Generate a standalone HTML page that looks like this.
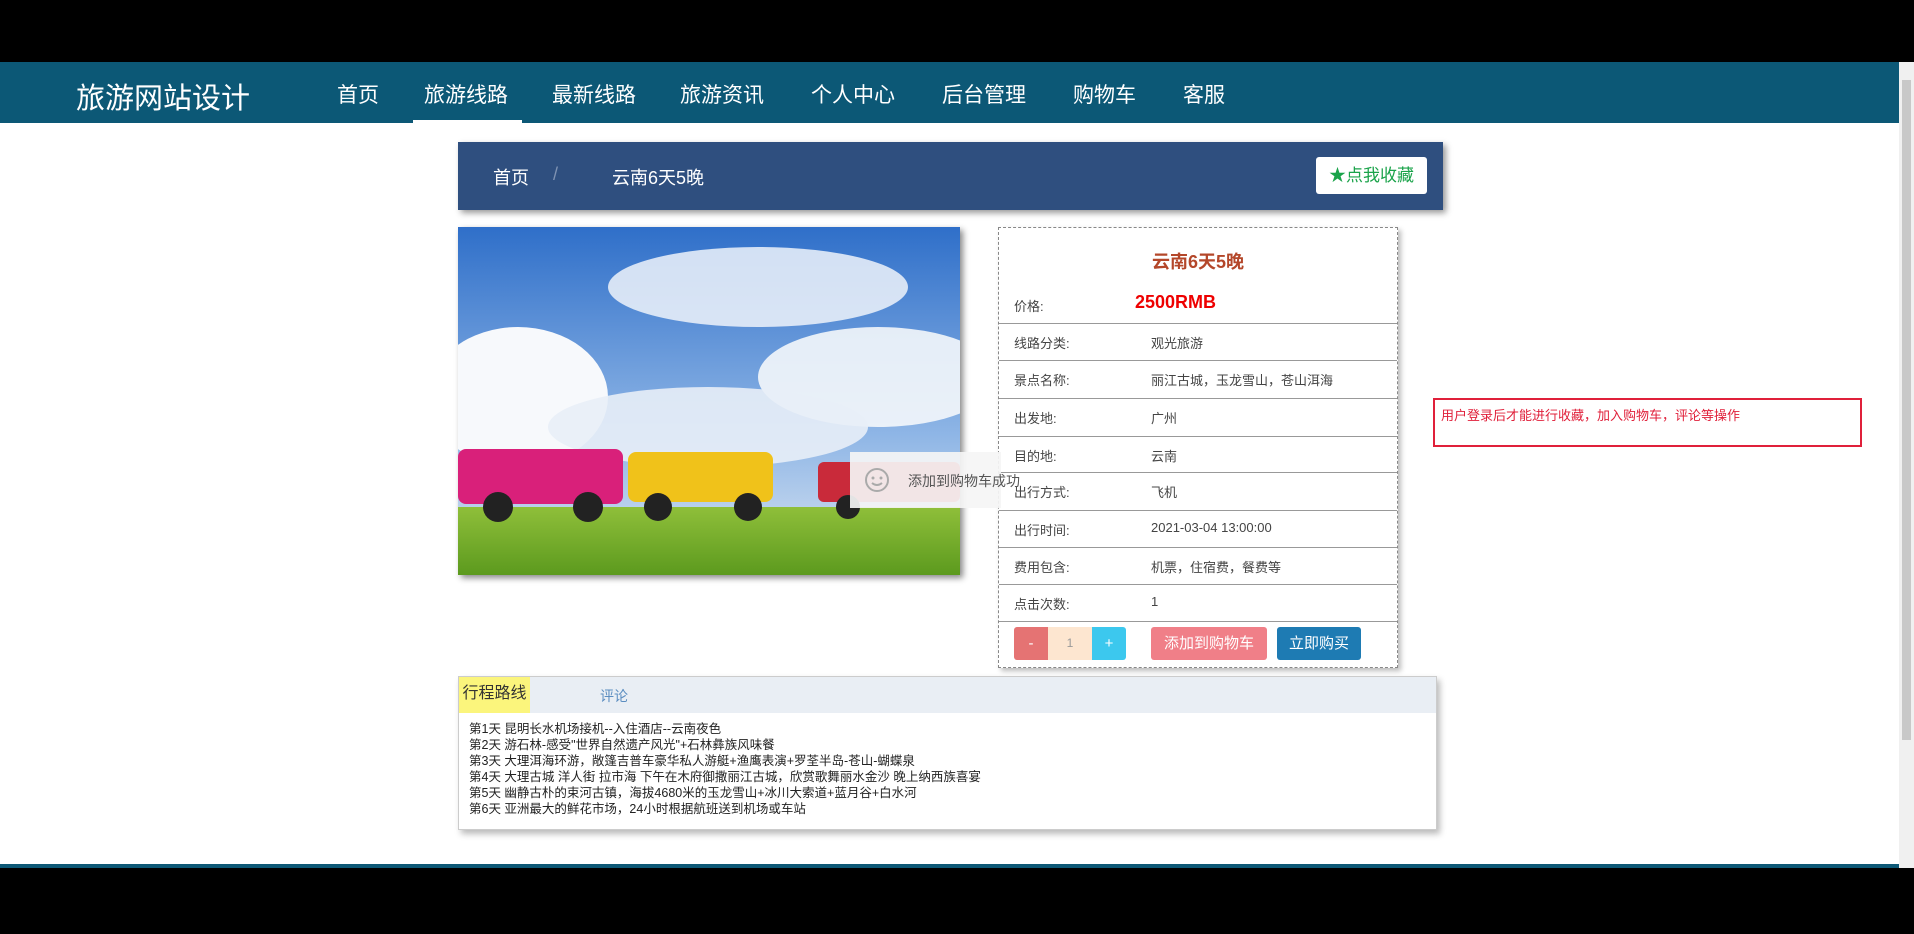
<!DOCTYPE html>
<html><head><meta charset="utf-8"><style>
*{margin:0;padding:0;box-sizing:border-box}
body{width:1914px;height:934px;background:#000;position:relative;overflow:hidden;font-family:"Liberation Sans","Noto Sans CJK SC",sans-serif}
.page{position:absolute;left:0;top:62px;width:1899px;height:802px;background:#fff}
.nav{position:absolute;left:0;top:0;width:1899px;height:61px;background:#0c5876}
.logo{position:absolute;left:76px;top:13px;color:#fff;font-size:29px}
.nav a{position:absolute;top:17px;color:#fff;font-size:21px;text-decoration:none}
.ul{position:absolute;left:413px;top:58px;width:109px;height:4px;background:#fff}
.bc{position:absolute;left:458px;top:80px;width:985px;height:68px;background:#2f4f7f;box-shadow:3px 3px 6px #999}
.bc span{position:absolute;top:22px;color:#fff;font-size:18px}
.fav{position:absolute;left:858px;top:15px;width:111px;height:37px;background:#fff;border-radius:3px;color:#1aa34a;font-size:17px;text-align:center;line-height:37px}
.img{position:absolute;left:458px;top:165px;width:502px;height:348px;box-shadow:3px 3px 6px #888;overflow:hidden}
.info{position:absolute;left:998px;top:165px;width:400px;height:441px;border:1px dashed #888;box-shadow:3px 3px 5px #bbb}
.title{position:absolute;left:0;width:100%;top:20px;text-align:center;color:#b4472a;font-size:18px;font-weight:bold}
.row{position:absolute;left:0;width:100%;height:38px;border-top:1px solid #999;font-size:13px;color:#444}
.row .l{position:absolute;left:15px;top:9px}
.row .v{position:absolute;left:152px;top:9px}
.btn{position:absolute;height:33px;color:#fff;font-size:15px;text-align:center;line-height:33px}
.toast{position:absolute;left:850px;top:390px;width:151px;height:56px;background:rgba(245,245,245,.92);color:#555;font-size:14px;white-space:nowrap}
.warn{position:absolute;left:1433px;top:336px;width:429px;height:49px;border:2px solid #e0203a;color:#e0203a;font-size:13px;padding:5px 6px}
.tabs{position:absolute;left:458px;top:614px;width:979px;height:154px;border:1px solid #ccc;box-shadow:3px 4px 6px #bbb}
.th{height:36px;background:#e9eef4}
.t1{position:absolute;left:0;top:0;width:71px;height:36px;background:#fbf57c;color:#333;font-size:16px;text-align:center;line-height:34px}
.t2{position:absolute;left:141px;top:9px;color:#5b8dc0;font-size:14px}
.lines{position:absolute;left:10px;top:44px;font-size:12.5px;line-height:16px;color:#222}
.sb{position:absolute;left:1899px;top:62px;width:15px;height:806px;background:#f0f0f0}
.thumb{position:absolute;left:3px;top:18px;width:9px;height:660px;background:#c8c8c8}
</style></head><body>
<div class="page">
<div class="nav">
<div class="logo">旅游网站设计</div>
<a style="left:337px">首页</a><a style="left:424px">旅游线路</a><a style="left:552px">最新线路</a><a style="left:680px">旅游资讯</a><a style="left:811px">个人中心</a><a style="left:942px">后台管理</a><a style="left:1073px">购物车</a><a style="left:1183px">客服</a>
<div class="ul"></div>
</div>
<div class="bc"><span style="left:35px">首页</span><span style="left:95px;color:#7f93b3">/</span><span style="left:154px">云南6天5晚</span><div class="fav">★点我收藏</div></div>
<div class="img"><svg width="502" height="348" viewBox="0 0 502 348">
<defs><linearGradient id="s" x1="0" y1="0" x2="0" y2="1"><stop offset="0" stop-color="#2f6fc9"/><stop offset=".6" stop-color="#8fb6e6"/><stop offset="1" stop-color="#dfe8f2"/></linearGradient>
<linearGradient id="g" x1="0" y1="0" x2="0" y2="1"><stop offset="0" stop-color="#8fbf3a"/><stop offset="1" stop-color="#5c9a1e"/></linearGradient></defs>
<rect width="502" height="348" fill="url(#s)"/>
<ellipse cx="300" cy="60" rx="150" ry="40" fill="#eef3fa" opacity=".85"/>
<ellipse cx="420" cy="150" rx="120" ry="50" fill="#f4f7fb" opacity=".9"/>
<ellipse cx="60" cy="170" rx="90" ry="70" fill="#f7f9fc"/>
<ellipse cx="250" cy="200" rx="160" ry="40" fill="#e8eef7" opacity=".9"/>
<rect y="280" width="502" height="68" fill="url(#g)"/>
<rect x="0" y="222" width="165" height="55" rx="8" fill="#d9207a"/>
<rect x="170" y="225" width="145" height="50" rx="8" fill="#f0c21a"/>
<rect x="360" y="235" width="142" height="40" rx="6" fill="#c92a3a"/>
<circle cx="40" cy="280" r="15" fill="#222"/><circle cx="130" cy="280" r="15" fill="#222"/>
<circle cx="200" cy="280" r="14" fill="#222"/><circle cx="290" cy="280" r="14" fill="#222"/>
<circle cx="390" cy="280" r="12" fill="#222"/>
</svg></div>
<div class="info">
<div class="title">云南6天5晚</div>
<div class="row" style="top:56px;border-top:none;height:38px"><span class="l" style="top:12px">价格:</span><span style="position:absolute;left:136px;top:8px;color:#e00;font-size:18px;font-weight:bold">2500RMB</span></div>
<div class="row" style="top:95px"><span class="l">线路分类:</span><span class="v">观光旅游</span></div>
<div class="row" style="top:132px"><span class="l">景点名称:</span><span class="v">丽江古城，玉龙雪山，苍山洱海</span></div>
<div class="row" style="top:170px"><span class="l">出发地:</span><span class="v">广州</span></div>
<div class="row" style="top:208px"><span class="l">目的地:</span><span class="v">云南</span></div>
<div class="row" style="top:244px"><span class="l">出行方式:</span><span class="v">飞机</span></div>
<div class="row" style="top:282px"><span class="l">出行时间:</span><span class="v">2021-03-04 13:00:00</span></div>
<div class="row" style="top:319px"><span class="l">费用包含:</span><span class="v">机票，住宿费，餐费等</span></div>
<div class="row" style="top:356px"><span class="l">点击次数:</span><span class="v">1</span></div>
<div class="row" style="top:393px;height:47px"></div>
<div class="btn" style="left:15px;top:399px;width:34px;background:#e57373;border-radius:3px 0 0 3px">-</div>
<div class="btn" style="left:49px;top:399px;width:44px;background:#fde6d0;color:#999;font-size:12px">1</div>
<div class="btn" style="left:93px;top:399px;width:34px;background:#3cc8ee;border-radius:0 3px 3px 0">+</div>
<div class="btn" style="left:152px;top:399px;width:116px;background:#f07f88;border-radius:3px">添加到购物车</div>
<div class="btn" style="left:278px;top:399px;width:84px;background:#1e7bb3;border-radius:3px">立即购买</div>
</div>
<div class="toast"><svg style="position:absolute;left:14px;top:15px" width="26" height="26" viewBox="0 0 26 26"><circle cx="13" cy="13" r="11" fill="none" stroke="#aaa" stroke-width="2"/><circle cx="9" cy="11" r="1.5" fill="#aaa"/><circle cx="17" cy="11" r="1.5" fill="#aaa"/><path d="M8 16q5 4 10 0" fill="none" stroke="#aaa" stroke-width="2"/></svg><span style="position:absolute;left:58px;top:19px">添加到购物车成功</span></div>
<div class="warn">用户登录后才能进行收藏，加入购物车，评论等操作</div>
<div class="tabs"><div class="th"><div class="t1">行程路线</div><div class="t2">评论</div></div>
<div class="lines">第1天 昆明长水机场接机--入住酒店--云南夜色<br>第2天 游石林-感受"世界自然遗产风光"+石林彝族风味餐<br>第3天 大理洱海环游，敞篷吉普车豪华私人游艇+渔鹰表演+罗荃半岛-苍山-蝴蝶泉<br>第4天 大理古城 洋人街 拉市海 下午在木府御撒丽江古城，欣赏歌舞丽水金沙 晚上纳西族喜宴<br>第5天 幽静古朴的束河古镇，海拔4680米的玉龙雪山+冰川大索道+蓝月谷+白水河<br>第6天 亚洲最大的鲜花市场，24小时根据航班送到机场或车站</div>
</div>
</div>
<div style="position:absolute;left:0;top:864px;width:1914px;height:4px;background:#0c5876"></div>
<div class="sb"><div class="thumb"></div></div>
</body></html>
